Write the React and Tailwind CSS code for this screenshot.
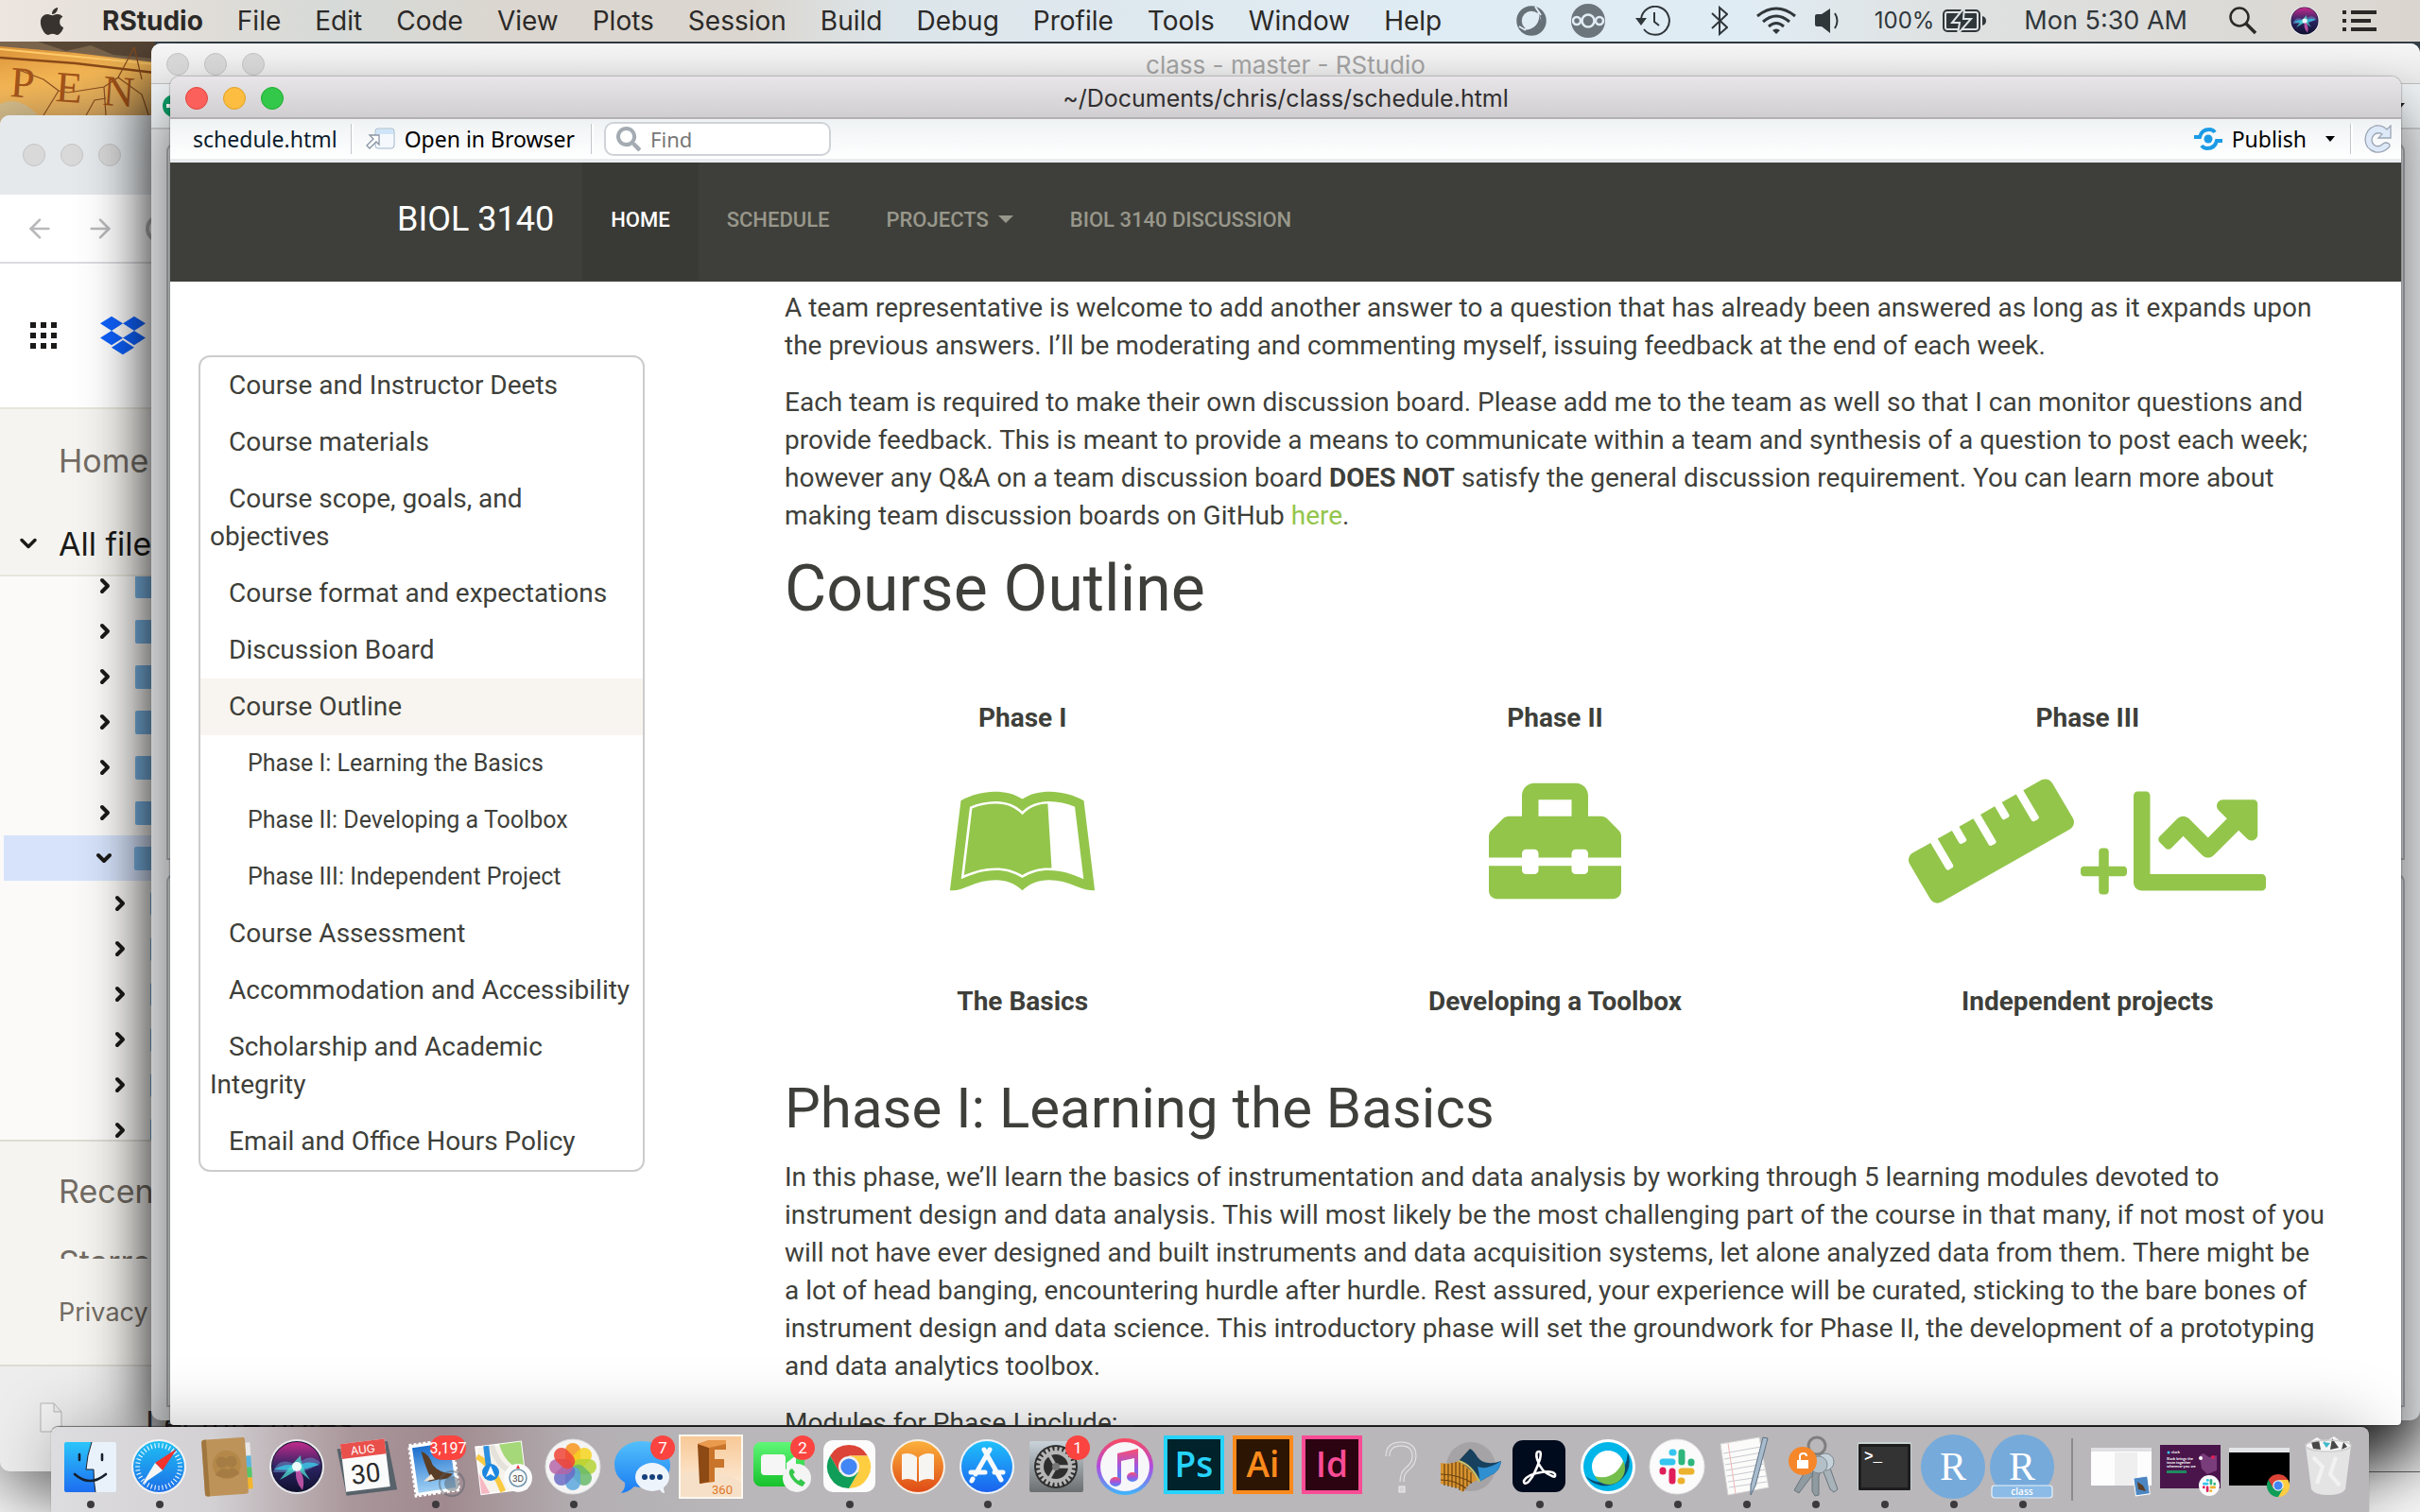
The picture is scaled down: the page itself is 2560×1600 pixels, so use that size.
import React from "react";
import {
  FaLeanpub,
  FaToolbox,
  FaRuler,
  FaPlus,
  FaChartLine,
  FaDropbox,
  FaApple,
  FaSearch,
} from "react-icons/fa";
import { ArrowLeft, ArrowRight, ChevronDown, ChevronRight } from "lucide-react";

const MENUS = ["File", "Edit", "Code", "View", "Plots", "Session", "Build", "Debug", "Profile", "Tools", "Window", "Help"];

/* ---------- menu bar ---------- */

function MenuBar() {
  return (
    <header
      className="relative z-40 flex h-[44px] items-center pl-[42px] pr-[46px] font-[Inter,sans-serif] text-[28px] text-[#2b2927] bg-[linear-gradient(90deg,#ede5df_0%,#dfdcd7_9%,#d6dad8_14%,#dbd6cf_21%,#dbd6cf_31%,#dce5ea_37%,#e0ecf4_60%,#e0ecf4_72%,#dfe2e2_80%,#dad5cf_100%)]"
    >
      <button aria-label="Apple menu" className="mr-[40px]">
        <FaApple className="h-[33px] w-[26px] text-[#38332e]" />
      </button>
      <nav className="flex items-center gap-[36px]">
        <button className="font-bold">RStudio</button>
        {MENUS.map((m) => (
          <button key={m}>{m}</button>
        ))}
      </nav>
      <div className="ml-auto flex items-center text-[#30373b]">
        <svg width="32" height="32" viewBox="0 0 32 32" aria-label="Sync">
          <circle cx="16" cy="16" r="13" fill="none" stroke="#667077" strokeWidth="5.5" />
          <path d="M23 7 C25 17 20 25 9 26 Q22 30 27 18 Z" fill="#667077" />
          <path d="M20 1 L26 10 M3 22 L10 26" stroke="#e0ecf4" strokeWidth="2" />
          <path d="M23 7 C25 17 20 24 9 25" fill="none" stroke="#e0ecf4" strokeWidth="1.5" />
        </svg>
        <svg className="ml-[26px]" width="36" height="36" viewBox="0 0 36 36" aria-label="Cloud client">
          <circle cx="18" cy="18" r="18" fill="#6b757b" />
          <g fill="#6b757b" stroke="#e0ecf4" strokeWidth="2.6">
            <circle cx="6" cy="18" r="4" />
            <circle cx="30" cy="18" r="4" />
            <circle cx="18" cy="18" r="6.5" />
          </g>
        </svg>
        <svg className="ml-[32px]" width="37" height="32" viewBox="0 0 37 32" fill="none" stroke="#30373b" strokeWidth="2" aria-label="Time Machine">
          <path d="M6 14 A15 15 0 1 1 9 25" />
          <path d="M20 7 V17 L25 21" />
          <path d="M0 13 H12 L6 21 Z" fill="#30373b" stroke="none" />
        </svg>
        <svg className="ml-[43px]" width="18" height="32" viewBox="0 0 18 32" fill="none" stroke="#30373b" strokeWidth="2" aria-label="Bluetooth">
          <path d="M1 8 L17 23 L9 30 V2 L17 9 L1 24" />
        </svg>
        <svg className="ml-[30px]" width="42" height="30" viewBox="0 0 42 30" fill="none" stroke="#30373b" strokeWidth="3" aria-label="Wi-Fi">
          <path d="M1 10 Q21 -6 41 10" />
          <path d="M7 16 Q21 4 35 16" />
          <path d="M13 21 Q21 14 29 21" />
          <path d="M17 25 Q21 22 25 25 L21 29 Z" fill="#30373b" stroke="none" />
        </svg>
        <svg className="ml-[20px]" width="26" height="26" viewBox="0 0 26 26" aria-label="Volume">
          <path d="M0 8 Q0 6 2 6 H7 L16 0 V26 L7 19 H2 Q0 19 0 17 Z" fill="#30373b" />
          <path d="M21 5 Q26 13 21 21" fill="none" stroke="#30373b" strokeWidth="2" />
        </svg>
        <span className="ml-[37px] text-[24px]">100%</span>
        <svg className="ml-[9px]" width="46" height="24" viewBox="0 0 46 24" aria-label="Battery charging">
          <rect x="1" y="1" width="38" height="22" rx="4" fill="none" stroke="#30373b" strokeWidth="2" />
          <rect x="4" y="4" width="32" height="16" rx="1" fill="#30373b" />
          <path d="M42 7 Q46 8 46 12 Q46 16 42 17 Z" fill="#30373b" />
          <path d="M23 -2 L10 14 H18 L16 26 L30 10 H22 Z" fill="#30373b" stroke="#dfe4e5" strokeWidth="2" />
        </svg>
        <span className="ml-[40px] text-[27px]">Mon 5:30 AM</span>
        <svg className="ml-[44px]" width="30" height="30" viewBox="0 0 30 30" fill="none" stroke="#2b2927" strokeWidth="2.5" aria-label="Search">
          <circle cx="11" cy="11" r="9.5" />
          <path d="M18 18 L28 28" strokeWidth="3.5" />
        </svg>
        <svg className="ml-[34px]" width="32" height="32" viewBox="0 0 64 64" aria-label="Siri">
          <SiriOrb r={31} cx={32} cy={32} />
        </svg>
        <svg className="ml-[24px]" width="36" height="22" viewBox="0 0 36 22" fill="#2b2927" aria-label="Notification Center">
          <path d="M0 0h4v4h-4zM0 9h4v4h-4zM0 18h4v4h-4zM9 0h27v4h-27zM9 9h21v4h-21zM9 18h27v4h-27z" />
        </svg>
      </div>
    </header>
  );
}

function SiriOrb({ cx, cy, r }) {
  return (
    <g>
      <circle cx={cx} cy={cy} r={r} fill="#e9e9ee" />
      <circle cx={cx} cy={cy} r={r - 2} fill="#12122c" />
      <circle cx={cx} cy={cy} r={r - 3} fill="url(#siriTop)" />
      <g transform={`translate(${cx} ${cy})`}>
        <path d="M-25 6 Q-20 -12 0 -2 Q14 -16 25 -4 Q14 4 1 6 Q-10 6 -25 6Z" fill="#6fa6dc" opacity=".45" />
        <path d="M-24 3 Q-8 -6 0 1 Q10 -8 24 -2 Q12 2 1 4 Q-10 4 -24 3Z" fill="#39c7e6" opacity=".8" />
        <path d="M-18 14 Q-6 -2 4 -12 Q4 0 14 14 Q4 6 0 3 Q-6 8 -18 14Z" fill="#4de0d0" opacity=".75" />
        <path d="M0 0 Q10 10 6 25 Q-4 14 0 0Z" fill="#e964c0" opacity=".75" />
        <circle r="5" fill="#fff" opacity=".9" />
      </g>
    </g>
  );
}

/* ---------- background windows ---------- */

function Wallpaper() {
  return (
    <svg className="absolute left-0 top-[44px] z-0" width="164" height="90" viewBox="0 0 164 90" aria-hidden="true">
      <defs>
        <linearGradient id="stone" x1="0" y1="0" x2="0.3" y2="1">
          <stop offset="0" stopColor="#d98f35" />
          <stop offset=".5" stopColor="#f3b655" />
          <stop offset="1" stopColor="#d8a862" />
        </linearGradient>
      </defs>
      <rect width="164" height="90" fill="url(#stone)" />
      <path d="M0 0 H164 V22 L80 12 L0 5 Z" fill="#7a644c" />
      <path d="M40 0 L70 10 L96 4 L120 14 L164 18 V0 Z" fill="#4b3a2e" opacity=".7" />
      <path d="M0 17 L80 23 L164 33" stroke="#8a4a18" strokeWidth="2.5" fill="none" />
      <path d="M0 8 L164 24" stroke="#ffcb6a" strokeWidth="2" fill="none" />
      <path d="M62 52 L72 54 L110 48 L125 38 L142 6 M110 48 L112 78 M125 38 L150 56 L158 80 M142 6 L150 40 M62 52 L46 78 M20 30 L46 40 L62 52 M90 80 L100 62 L112 60" stroke="#8a4e20" strokeWidth="1.2" fill="none" />
      <path d="M0 66 Q20 56 40 78 L40 90 H0Z" fill="#c7bd9d" opacity=".7" />
      <g fill="#a4541a" fontFamily="Liberation Serif, serif" fontSize="46">
        <text x="10" y="58" transform="rotate(4 10 58)">P</text>
        <text x="58" y="63" transform="rotate(4 58 63)">E</text>
        <text x="108" y="67" transform="rotate(4 108 67)">N</text>
      </g>
    </svg>
  );
}

function GrayDots() {
  return (
    <div className="flex gap-[16px]">
      {[0, 1, 2].map((i) => (
        <span key={i} className="size-[24px] rounded-full border border-[#c4c4c4] bg-[#d9d9d9]" />
      ))}
    </div>
  );
}

function BrowserWindow() {
  return (
    <section
      aria-label="Dropbox"
      className="absolute bottom-[43px] left-0 top-[122px] z-10 flex w-[1200px] flex-col overflow-hidden rounded-[10px] bg-[#ededed] font-[Inter,sans-serif] shadow-[0_20px_60px_rgba(0,0,0,0.45)]"
    >
      <div className="flex h-[84px] shrink-0 items-center bg-[#e5e9ec] pl-[24px]">
        <GrayDots />
      </div>
      <div className="flex h-[73px] shrink-0 items-center gap-[32px] border-b-2 border-[#dcdce0] bg-white pl-[26px] text-[#b9b9bb]">
        <ArrowLeft size={32} />
        <ArrowRight size={32} />
        <span className="size-[30px] rounded-full border-4" />
      </div>
      <div className="flex h-[154px] shrink-0 items-center gap-[46px] border-b-2 border-[#e8e5dc] bg-white pl-[32px]">
        <div className="grid grid-cols-3 gap-[5px]">
          {Array.from({ length: 9 }, (_, i) => (
            <span key={i} className="size-[6px] bg-[#1b1a19]" />
          ))}
        </div>
        <FaDropbox className="size-[48px] text-[#0f62fe]" />
      </div>
      <div className="h-[177px] shrink-0 border-b-2 border-[#e8e5dc] bg-[#f5f4f0] text-[34px]">
        <div className="flex h-[108px] items-center pl-[62px] text-[#736c64]">Home</div>
        <div className="flex h-[68px] items-center gap-[18px] pl-[16px] text-[#1b1a19]">
          <ChevronDown size={28} strokeWidth={3} />
          All files
        </div>
      </div>
      <div className="h-[596px] shrink-0 overflow-hidden bg-[#fbfaf8]">
        <div className="-mt-[14px]">
          {Array.from({ length: 13 }, (_, i) => (
            <div
              key={i}
              className={
                i === 6
                  ? "ml-[4px] flex h-[48px] items-center bg-[#d6e3fb] pl-[94px]"
                  : i > 6
                    ? "flex h-[48px] items-center pl-[115px]"
                    : "flex h-[48px] items-center pl-[99px]"
              }
            >
              {i === 6 ? (
                <ChevronDown size={24} strokeWidth={4} className="text-[#1b1a19]" />
              ) : (
                <ChevronRight size={24} strokeWidth={4} className="text-[#1b1a19]" />
              )}
              <span className="ml-[20px] h-[25px] w-[40px] rounded-[2px] bg-[#7bb5e6]" />
            </div>
          ))}
        </div>
      </div>
      <div className="h-[240px] shrink-0 border-b-2 border-t-2 border-[#dedbd3] bg-[#f5f4f0] text-[#736c64]">
        <div className="flex h-[104px] items-center pl-[62px] text-[34px]">Recents</div>
        <div className="h-[20px] overflow-hidden pl-[62px] text-[34px] leading-[48px]">Starred</div>
        <div className="flex h-[114px] items-center pl-[62px] text-[27px]">Privacy</div>
      </div>
      <div className="flex flex-1 items-start pl-[42px] pt-[38px]">
        <svg width="24" height="32" viewBox="0 0 24 32" fill="#f4f4f4" stroke="#b5b5b5" aria-hidden="true">
          <path d="M1 1 H15 L23 10 V31 H1 Z M15 1 V10 H23" />
        </svg>
        <span className="ml-[88px] text-[34px] leading-[44px] text-[#3a3a3a]">Lecture notes</span>
      </div>
    </section>
  );
}

function StudioWindow() {
  return (
    <section
      aria-label="class - master - RStudio"
      className="absolute bottom-[97px] left-[160px] right-0 top-[46px] z-20 rounded-[10px] bg-[#e6e8ea] shadow-[0_24px_70px_rgba(0,0,0,0.8)]"
    >
      <div className="relative flex h-[43px] items-start justify-center rounded-t-[10px] border-b border-[#bfbfbf] bg-gradient-to-b from-[#f6f6f6] to-[#eaeaea] pt-[6px] font-[Inter,sans-serif] text-[26px] leading-[34px] text-[#a3a3a3]">
        <div className="absolute left-[16px] top-[10px]">
          <GrayDots />
        </div>
        class - master - RStudio
      </div>
      <div className="flex h-[48px] items-center justify-between border-b-2 border-[#c9cccf] bg-[#eff3f5] pl-[12px]">
        <span className="flex size-[24px] items-center justify-center rounded-full bg-[#0a9c66] text-white">
          <span className="h-[4px] w-[16px] bg-white" />
        </span>
        <span className="mr-[16px] size-0 border-x-[5px] border-t-[6px] border-x-transparent border-t-[#222]" />
      </div>
      <div className="mx-[16px] mt-[15px] h-[758px] rounded-t-[8px] border-2 border-[#aeb2b5]" />
      <div className="mx-[16px] mt-[15px] h-[564px] rounded-t-[8px] border-2 border-[#aeb2b5]" />
    </section>
  );
}

/* ---------- viewer window ---------- */

const TOC = [
  { t: "Course and Instructor Deets" },
  { t: "Course materials" },
  { t: "Course scope, goals, and objectives" },
  { t: "Course format and expectations" },
  { t: "Discussion Board" },
  { t: "Course Outline", active: true },
  { t: "Phase I: Learning the Basics", sub: true },
  { t: "Phase II: Developing a Toolbox", sub: true },
  { t: "Phase III: Independent Project", sub: true },
  { t: "Course Assessment" },
  { t: "Accommodation and Accessibility" },
  { t: "Scholarship and Academic Integrity" },
  { t: "Email and Office Hours Policy" },
];

function Divider() {
  return <span className="h-[32px] w-[3px] border-l border-[#c3c7ca] bg-white" />;
}

function Toolbar() {
  return (
    <div className="flex h-[46px] shrink-0 items-center border-b-4 border-[#e9ecee] bg-gradient-to-b from-[#eff2f4] to-white pl-[24px] pr-[9px] font-['Noto_Sans',sans-serif] text-[23px] text-black">
      <span className="text-[#0b1c2c]">schedule.html</span>
      <span className="ml-[14px] flex">
        <Divider />
      </span>
      <button className="ml-[13px] flex items-center gap-[10px]">
        <svg width="31" height="24" viewBox="0 0 31 24" aria-hidden="true">
          <rect x="10" y="1" width="20" height="21" rx="3" fill="#f5f9fd" stroke="#9fb6cc" />
          <path d="M11 7 V4 Q11 2 13 2 H27 Q29 2 29 4 V7 Z" fill="#cfe4f8" />
          <path d="M4 8 H14 V18 L11 15 L4 22 L1 19 L8 12 Z" fill="#fff" stroke="#8894a4" strokeWidth="1.3" />
        </svg>
        Open in Browser
      </button>
      <span className="ml-[17px] flex">
        <Divider />
      </span>
      <label className="ml-[11px] flex h-[36px] w-[240px] items-center gap-[10px] rounded-[10px] border-2 border-[#cfd3d8] bg-white px-[11px]">
        <FaSearch className="size-[26px] shrink-0 text-[#a4abb2]" />
        <input type="text" aria-label="Find" placeholder="Find" className="w-full bg-transparent text-[22px] outline-none placeholder:text-[#777]" />
      </label>
      <button className="ml-auto flex items-center gap-[10px]">
        <svg width="30" height="26" viewBox="0 0 30 26" fill="none" stroke="#1b9be6" strokeWidth="4" aria-hidden="true">
          <path d="M0 11 H6 Q8 3 16 3 Q20 3 22 6" />
          <path d="M30 15 H24 Q22 23 14 23 Q10 23 8 20" />
          <circle cx="15" cy="13" r="4.5" fill="#1b9be6" stroke="none" />
        </svg>
        Publish
      </button>
      <button aria-label="Publish options" className="ml-[20px]">
        <span className="block size-0 border-x-[5px] border-t-[6px] border-x-transparent border-t-black" />
      </button>
      <span className="ml-[16px] flex">
        <Divider />
      </span>
      <button aria-label="Refresh" className="ml-[12px]">
        <svg width="30" height="30" viewBox="0 0 30 30" aria-hidden="true">
          <path
            d="M28 1 V14 H15 L19 10 Q14 7 10 11 Q6 16 10 21 Q15 25 20 20 Q23 18 26 20 Q28 22 26 24 Q20 30 12 29 Q1 26 1 15 Q2 4 12 1 Q19 0 24 5 Z"
            fill="#dde9f8"
            stroke="#9ca6b4"
            strokeWidth="1.3"
          />
        </svg>
      </button>
    </div>
  );
}

function NavItem({ children, active }) {
  return (
    <a
      href="#"
      className={
        active
          ? "flex h-full items-center bg-[#393a35] px-[30px] pb-[4px] text-white"
          : "flex h-full items-center px-[30px] pb-[4px] text-[#98978b]"
      }
    >
      {children}
    </a>
  );
}

function PhaseColumn({ top, bottom, children }) {
  return (
    <div className="flex flex-1 flex-col items-center font-bold">
      <div>{top}</div>
      <div className="mb-20 mt-10 flex h-[140px] items-end gap-[7px] text-[#93c54b]">{children}</div>
      <div>{bottom}</div>
    </div>
  );
}

function ViewerWindow() {
  return (
    <section
      aria-label="~/Documents/chris/class/schedule.html"
      className="absolute bottom-[92px] left-[180px] right-[20px] top-[81px] z-30 flex flex-col overflow-hidden rounded-t-[10px] rounded-b-[4px] bg-white shadow-[0_34px_60px_rgba(0,0,0,0.55),0_0_2px_rgba(0,0,0,0.6)]"
    >
      <div className="relative flex h-[45px] shrink-0 items-center justify-center border-b-2 border-[#b2b0b2] bg-gradient-to-b from-[#e8e6e8] to-[#d0ced0] pt-[4px] font-[Inter,sans-serif] text-[25px] text-[#302e30]">
        <div className="absolute left-[16px] top-[11px] flex gap-[16px]">
          <button aria-label="Close" className="size-[24px] rounded-full border border-[#e2463f] bg-[#fc605b]" />
          <button aria-label="Minimize" className="size-[24px] rounded-full border border-[#dfa023] bg-[#fdbd40]" />
          <button aria-label="Zoom" className="size-[24px] rounded-full border border-[#1dac2f] bg-[#34c84a]" />
        </div>
        ~/Documents/chris/class/schedule.html
      </div>
      <Toolbar />
      <nav className="flex h-[126px] shrink-0 items-center bg-[#3e3f3a] pb-[2px] pl-[210px] font-[Roboto,sans-serif] text-[22px] font-medium">
        <a href="#" className="px-[30px] pb-[4px] text-[36px] font-normal text-white">
          BIOL 3140
        </a>
        <NavItem active>HOME</NavItem>
        <NavItem>SCHEDULE</NavItem>
        <NavItem>
          PROJECTS
          <span className="ml-[10px] size-0 border-x-[8px] border-t-[8px] border-x-transparent border-t-[#98978b]" />
        </NavItem>
        <NavItem>BIOL 3140 DISCUSSION</NavItem>
      </nav>
      <div className="flex min-h-0 flex-1 overflow-hidden pl-[30px] pr-[80px] font-[Roboto,sans-serif] text-[28px] leading-[40px] text-[#3e3f3a]">
        <aside className="w-[472px] shrink-0 pt-[78px]">
          <ul className="overflow-hidden rounded-[12px] border-2 border-[#cccccc]">
            {TOC.map((e) => (
              <li key={e.t}>
                <a
                  href="#"
                  className={
                    e.sub
                      ? "block py-[10px] pl-[50px] pr-[8px] text-[25px]"
                      : e.active
                        ? "block bg-[#f8f5f0] py-[10px] pl-[10px] pr-[8px] indent-[20px]"
                        : "block py-[10px] pl-[10px] pr-[8px] indent-[20px]"
                  }
                >
                  {e.t}
                </a>
              </li>
            ))}
          </ul>
        </aside>
        <main className="ml-[148px] min-w-0 flex-1 pt-2">
          <p>
            A team representative is welcome to add another answer to a question that has already been answered as long as it expands upon the previous answers. I’ll be moderating and commenting myself, issuing feedback at the end of each week.
          </p>
          <p className="mt-5">
            Each team is required to make their own discussion board. Please add me to the team as well so that I can monitor questions and provide feedback. This is meant to provide a means to communicate within a team and synthesis of a question to post each week; however any Q&amp;A on a team discussion board <strong>DOES NOT</strong> satisfy the general discussion requirement. You can learn more about making team discussion boards on GitHub{" "}
            <a href="#" className="text-[#93c54b]">
              here
            </a>
            .
          </p>
          <h1 className="mt-5 text-[68px] leading-[74px]">Course Outline</h1>
          <div className="-mx-[30px] mt-20 flex">
            <PhaseColumn top="Phase I" bottom="The Basics">
              <FaLeanpub className="h-[140px] w-[157px]" />
            </PhaseColumn>
            <PhaseColumn top="Phase II" bottom="Developing a Toolbox">
              <FaToolbox className="size-[140px]" />
            </PhaseColumn>
            <PhaseColumn top="Phase III" bottom="Independent projects">
              <FaRuler className="h-[140px] w-[175px]" />
              <FaPlus className="mb-[10px] h-[56px] w-[49px]" />
              <FaChartLine className="size-[140px]" />
            </PhaseColumn>
          </div>
          <h2 className="mt-15 text-[60px] leading-[66px]">Phase I: Learning the Basics</h2>
          <p className="mt-5">
            In this phase, we’ll learn the basics of instrumentation and data analysis by working through 5 learning modules devoted to instrument design and data analysis. This will most likely be the most challenging part of the course in that many, if not most of you will not have ever designed and built instruments and data acquisition systems, let alone analyzed data from them. There might be a lot of head banging, encountering hurdle after hurdle. Rest assured, your experience will be curated, sticking to the bare bones of instrument design and data science. This introductory phase will set the groundwork for Phase II, the development of a prototyping and data analytics toolbox.
          </p>
          <p className="mt-5">Modules for Phase I include:</p>
        </main>
      </div>
    </section>
  );
}

/* ---------- dock ---------- */

function Badge({ x, y, w = 26, size = 17, children }) {
  return (
    <g>
      <rect x={x - w / 2} y={y - 13} width={w} height="26" rx="13" fill="#fb4440" />
      <text x={x} y={y + 6} textAnchor="middle" fontSize={size} fill="#fff" fontFamily="Roboto, sans-serif">
        {children}
      </text>
    </g>
  );
}

function ChromeMark({ cx, cy, r }) {
  return (
    <g transform={`translate(${cx} ${cy}) scale(${r / 24})`}>
      <path d="M-20.8 -12 A24 24 0 0 1 20.8 -12 H0 L-10.4 6 Z" fill="#db4437" />
      <path d="M20.8 -12 A24 24 0 0 1 0 24 L10.4 6 L0 -12 Z" fill="#ffcd40" />
      <path d="M0 24 A24 24 0 0 1 -20.8 -12 L-10.4 6 L10.4 6 Z" fill="#0f9d58" />
      <circle r="11.5" fill="#f1f1f1" />
      <circle r="9" fill="#4285f4" />
    </g>
  );
}

function SlackMark({ cx, cy, s }) {
  return (
    <g transform={`translate(${cx} ${cy}) scale(${s})`} strokeWidth="7" strokeLinecap="round">
      <path d="M-4 -15 H-5" stroke="#36c5f0" />
      <path d="M-15 -5 H-5" stroke="#36c5f0" />
      <path d="M5 -15 V-5" stroke="#2eb67d" />
      <path d="M15 -5 V-4" stroke="#2eb67d" />
      <path d="M5 5 H15" stroke="#ecb22e" />
      <path d="M5 15 H4" stroke="#ecb22e" />
      <path d="M-5 5 V15" stroke="#e01e5a" />
      <path d="M-15 5 V4" stroke="#e01e5a" />
    </g>
  );
}

function AdobeTile({ bg, fg, children }) {
  return (
    <g>
      <rect x="6" y="9" width="60" height="58" fill={bg} stroke={fg} strokeWidth="4" />
      <text x="36" y="51" textAnchor="middle" fontSize="37" fill={fg} fontFamily="Open Sans, sans-serif" fontWeight="600">
        {children}
      </text>
    </g>
  );
}

function RTile() {
  return (
    <g>
      <circle cx="36" cy="40" r="34" fill="#75aadb" />
      <text x="36" y="54" textAnchor="middle" fontSize="42" fill="#fff" fontFamily="Liberation Serif, serif">
        R
      </text>
    </g>
  );
}

const GEAR = Array.from({ length: 24 }, (_, i) => i * 15);
const TICKS = Array.from({ length: 36 }, (_, i) => i * 10);
const PETALS = ["#f7941d", "#f6d21e", "#b4d334", "#67b86a", "#5ba7dd", "#6a6cc4", "#b565a7", "#ee4436"];

const APPS = [
  {
    name: "Finder",
    dot: true,
    art: (
      <g>
        <rect x="9" y="14" width="55" height="53" rx="2" fill="#e9f1fa" />
        <path d="M9 16 Q9 14 11 14 H38 Q33 28 32 43 H40 Q40 56 42 67 H11 Q9 67 9 65 Z" fill="url(#finder)" />
        <path d="M25 27 V33 M49 27 V33 M20 48 Q36 62 53 48" fill="none" stroke="#15202e" strokeWidth="2.6" strokeLinecap="round" />
        <path d="M38 14 Q33 28 32 43 H40 Q40 56 42 67" fill="none" stroke="#15202e" strokeWidth="1" />
      </g>
    ),
  },
  {
    name: "Safari",
    dot: true,
    art: (
      <g>
        <circle cx="36" cy="40" r="29" fill="#f3f3f4" />
        <circle cx="36" cy="40" r="27" fill="url(#safari)" />
        {TICKS.map((a) => (
          <path key={a} d="M36 15 V20" stroke="#fff" strokeWidth="1" transform={`rotate(${a} 36 40)`} />
        ))}
        <path d="M55 21 L40 44 L32 36 Z" fill="#f3322d" />
        <path d="M18 59 L32 36 L40 44 Z" fill="#f6f6f6" />
      </g>
    ),
  },
  {
    name: "Contacts",
    art: (
      <g transform="rotate(-4 36 40)">
        <rect x="52" y="16" width="9" height="14" fill="#e8e8e8" />
        <rect x="52" y="30" width="9" height="12" fill="#5ab6e0" />
        <rect x="52" y="42" width="9" height="11" fill="#55c66a" />
        <rect x="52" y="53" width="9" height="12" fill="#f3b52b" />
        <rect x="10" y="10" width="46" height="60" rx="3" fill="#bd935a" />
        <path d="M10 13 Q10 10 13 10 H15 V70 H13 Q10 70 10 67Z" fill="#a0763f" />
        <circle cx="35" cy="38" r="15" fill="#b38849" />
        <circle cx="30" cy="35" r="6" fill="#a57c44" />
        <circle cx="40" cy="35" r="6" fill="#a57c44" />
        <path d="M22 48 Q30 38 36 44 Q42 38 48 48 Q36 56 22 48Z" fill="#a57c44" />
      </g>
    ),
  },
  { name: "Siri", art: <SiriOrb cx={36} cy={40} r={29} /> },
  {
    name: "Calendar",
    art: (
      <g transform="rotate(-7 36 40)">
        <path d="M8 18 L62 16 L66 68 L12 68 Z" fill="#57626a" />
        <rect x="12" y="13" width="47" height="51" fill="#fbfbfb" />
        <rect x="12" y="13" width="47" height="16" fill="#e9504c" />
        <text x="35" y="26" textAnchor="middle" fontSize="12" fill="#fff" fontFamily="Inter, sans-serif">AUG</text>
        <text x="35" y="57" textAnchor="middle" fontSize="28" fill="#2b2b2b" fontFamily="Roboto, sans-serif">30</text>
      </g>
    ),
  },
  {
    name: "Mail",
    dot: true,
    art: (
      <g>
        <g transform="rotate(-8 36 40)">
          <rect x="12" y="14" width="46" height="54" fill="#fff" stroke="#fff" strokeWidth="3" strokeDasharray="3 2" />
          <rect x="15" y="17" width="40" height="48" fill="url(#mailsky)" />
          <path d="M24 22 Q32 26 34 38 Q40 48 54 50 Q48 56 38 54 L27 55 L29 48 Q25 34 24 22Z" fill="#5a3d25" />
          <path d="M22 54 L31 47 L34 53 Z" fill="#f0e6d6" />
        </g>
        <circle cx="54" cy="58" r="13" fill="none" stroke="#566069" strokeWidth="2" opacity=".5" />
        <circle cx="54" cy="58" r="8" fill="#566069" opacity=".5" />
        <Badge x={50} y={20} w={38} size={16}>3,197</Badge>
      </g>
    ),
  },
  {
    name: "Maps",
    art: (
      <g>
        <g transform="rotate(-7 36 40)">
          <rect x="9" y="16" width="48" height="50" fill="#f6f3ec" stroke="#fff" strokeWidth="2" />
          <path d="M34 16 H57 V46 Q38 40 34 16Z" fill="#a5d878" />
          <path d="M26 16 Q30 46 57 52" fill="none" stroke="#e4e2da" strokeWidth="6" />
          <path d="M9 26 Q24 36 32 66" fill="none" stroke="#f9c940" strokeWidth="6" />
          <path d="M9 44 L18 66 H9Z" fill="#f6b8c3" />
          <path d="M20 16 V52" stroke="#2d8fe0" strokeWidth="6" />
        </g>
        <circle cx="22" cy="46" r="9" fill="#1d87e0" />
        <path d="M22 39 L27 51 L22 48 L17 51Z" fill="#fff" />
        <circle cx="51" cy="52" r="15" fill="#fafafa" />
        <circle cx="51" cy="52" r="9" fill="none" stroke="#6d93ac" strokeWidth="1.5" />
        <path d="M51 38 L53 42 H49Z" fill="#e33" />
        <text x="51" y="56" textAnchor="middle" fontSize="9" fill="#444" fontFamily="Inter, sans-serif">3D</text>
      </g>
    ),
  },
  {
    name: "Photos",
    dot: true,
    art: (
      <g>
        <circle cx="36" cy="40" r="29" fill="#f4f4f4" stroke="#dcdcdc" />
        {PETALS.map((c, i) => (
          <rect key={c} x="28" y="15" width="16" height="25" rx="8" fill={c} opacity=".85" transform={`rotate(${i * 45} 36 40)`} />
        ))}
      </g>
    ),
  },
  {
    name: "Messages",
    art: (
      <g>
        <path d="M36 13 C54 13 66 24 66 38 C66 52 54 62 38 62 Q32 62 28 61 Q22 67 14 68 Q19 63 18 57 Q7 50 7 38 C7 24 19 13 36 13Z" fill="url(#msg)" />
        <ellipse cx="47" cy="51" rx="18" ry="15" fill="#eef4fb" />
        <path d="M54 62 Q56 68 60 68 L58 58Z" fill="#eef4fb" />
        <g fill="#14407c">
          <circle cx="39" cy="51" r="3" />
          <circle cx="47" cy="51" r="3" />
          <circle cx="55" cy="51" r="3" />
        </g>
        <Badge x={58} y={20}>7</Badge>
      </g>
    ),
  },
  {
    name: "Fusion 360",
    art: (
      <g>
        <rect x="3" y="7" width="66" height="66" fill="url(#fusion)" stroke="#fdf8f0" strokeWidth="2" />
        <path d="M4 48 Q36 38 68 56 V72 H4Z" fill="#f6e0c8" />
        <path d="M22 16 L34 12 H52 V22 H40 V32 H50 V41 H40 V56 L24 58 Q26 40 22 16Z" fill="#c8742a" />
        <path d="M22 16 L34 20 V56 L24 58Z" fill="#8d4a14" />
        <path d="M34 12 H52 V16 L34 20 L22 16Z" fill="#e99a4d" />
        <text x="48" y="69" textAnchor="middle" fontSize="13" fill="#e2771f" fontFamily="Roboto, sans-serif">360</text>
      </g>
    ),
  },
  {
    name: "FaceTime",
    art: (
      <g>
        <rect x="8" y="14" width="54" height="47" rx="8" fill="url(#ftime)" />
        <rect x="16" y="27" width="26" height="22" rx="4" fill="#f6f6f6" />
        <path d="M43 36 L53 28 V48 L43 42Z" fill="#f6f6f6" />
        <circle cx="54" cy="52" r="15" fill="#f4f4f4" />
        <path d="M47 43 Q44 46 48 52 Q54 60 60 61 L63 57 L58 53 L56 55 Q52 53 50 48 L52 46 L49 42Z" fill="#35c84c" />
        <Badge x={60} y={20}>2</Badge>
      </g>
    ),
  },
  {
    name: "Chrome",
    dot: true,
    art: (
      <g>
        <rect x="9" y="12" width="55" height="55" rx="10" fill="#fcfcfc" />
        <ChromeMark cx={36} cy={40} r={23} />
      </g>
    ),
  },
  {
    name: "Books",
    art: (
      <g>
        <circle cx="36" cy="40" r="29" fill="#f6efe6" />
        <circle cx="36" cy="40" r="27" fill="url(#books)" />
        <path d="M35 30 Q28 24 19 27 V54 Q28 51 35 56Z M37 30 Q44 24 53 27 V54 Q44 51 37 56Z" fill="#f7f5f2" />
      </g>
    ),
  },
  {
    name: "App Store",
    dot: true,
    art: (
      <g>
        <circle cx="36" cy="40" r="29" fill="#eef3f8" />
        <circle cx="36" cy="40" r="27" fill="url(#store)" />
        <g stroke="#f7f9fc" strokeWidth="5" strokeLinecap="round" fill="none">
          <path d="M33 22 L51 54 M39 22 L24 48 M19 46 H34 M44 46 H53 M21 53 L20 55" />
        </g>
      </g>
    ),
  },
  {
    name: "System Preferences",
    art: (
      <g>
        <rect x="8" y="13" width="57" height="54" rx="2" fill="url(#prefs)" />
        <circle cx="36" cy="40" r="23" fill="#2e2e2e" />
        {GEAR.map((a) => (
          <path key={a} d="M36 19 V24" stroke="#b9b9b9" strokeWidth="3" transform={`rotate(${a} 36 40)`} />
        ))}
        <circle cx="36" cy="40" r="15" fill="none" stroke="#b5b5b5" strokeWidth="4" />
        <path d="M36 40 L52 40 M36 40 L28 26 M36 40 L28 54" stroke="#b5b5b5" strokeWidth="3.5" />
        <circle cx="36" cy="40" r="4" fill="#777" />
        <Badge x={59} y={20}>1</Badge>
      </g>
    ),
  },
  {
    name: "iTunes",
    art: (
      <g>
        <circle cx="36" cy="40" r="30" fill="url(#tunesRing)" />
        <circle cx="36" cy="40" r="26" fill="#f7f6f9" />
        <g fill="url(#tunes)">
          <path d="M28 26 L50 21 V50 H46 V31 L32 34 V56 H28Z" />
          <ellipse cx="26" cy="56" rx="6" ry="5" />
          <ellipse cx="44" cy="51" rx="6" ry="5" />
        </g>
      </g>
    ),
  },
  { name: "Photoshop", art: <AdobeTile bg="#00222b" fg="#26d3fb">Ps</AdobeTile> },
  { name: "Illustrator", art: <AdobeTile bg="#2d1503" fg="#fb8a1c">Ai</AdobeTile> },
  { name: "InDesign", art: <AdobeTile bg="#2b0311" fg="#f94c95">Id</AdobeTile> },
  {
    name: "Missing application",
    art: (
      <g>
        <path d="M22 29 Q22 16 36 16 Q50 16 50 29 Q50 37 42 43 Q37 47 37 56" fill="none" stroke="#e6e6e8" strokeWidth="5" />
        <path d="M22 29 Q22 16 36 16 Q50 16 50 29 Q50 37 42 43 Q37 47 37 56" fill="none" stroke="#bdbbbe" strokeWidth="3" />
        <rect x="34" y="61" width="6" height="6" fill="#d4d3d6" stroke="#ececec" />
      </g>
    ),
  },
  {
    name: "MATLAB",
    art: (
      <g>
        <circle cx="37" cy="40" r="26" fill="#a5a3a6" />
        <path d="M5 36 Q16 38 24 34 L36 21 L50 44 L44 54 L36 58 L28 67 L24 63 L5 58Z" fill="#d8942f" />
        <g stroke="#6d4210" strokeWidth="1.2" fill="none">
          <path d="M9 37 V60 M13 37 V61 M17 36 V62 M21 35 V63 M25 35 V65 M29 38 V66 M33 42 V61 M37 46 V58 M5 48 Q22 48 38 57 M5 54 Q20 54 32 63" />
        </g>
        <path d="M24 34 L36 21 Q40 23 44 30 Q52 40 69 34 Q68 45 58 49 L46 56 Q38 42 24 34Z" fill="#17415f" />
        <path d="M44 40 Q54 44 69 34 Q68 45 58 49 L46 56 Q46 46 44 40Z" fill="#2f8fd0" />
        <path d="M24 34 Q38 38 46 56" fill="none" stroke="#c9c06a" strokeWidth="2" />
      </g>
    ),
  },
  {
    name: "Acrobat",
    dot: true,
    art: (
      <g>
        <rect x="8" y="12" width="56" height="55" rx="11" fill="#000b1d" />
        <path d="M36 24 Q32 24 34 32 Q38 46 50 50 Q54 52 53 48 Q50 44 38 46 Q24 48 20 55 Q20 60 25 56 Q32 48 37 32 Q39 24 36 24Z" fill="none" stroke="#fff" strokeWidth="2.6" />
      </g>
    ),
  },
  {
    name: "Webex",
    dot: true,
    art: (
      <g>
        <circle cx="36" cy="40" r="29" fill="#fff" />
        <circle cx="36" cy="40" r="26" fill="#00b5e8" />
        <path d="M57 25 A26 26 0 0 1 12 50 Q28 62 44 52 Q56 42 57 25Z" fill="#0a4b70" />
        <circle cx="36" cy="40" r="17" fill="#fff" />
        <path d="M52 34 A17 17 0 0 1 22 50 Q34 54 44 46 Q50 40 52 34Z" fill="#74bf4b" />
      </g>
    ),
  },
  {
    name: "Slack",
    dot: true,
    art: (
      <g>
        <circle cx="36" cy="40" r="29" fill="#fbfbfb" stroke="#e2e2e2" />
        <SlackMark cx={36} cy={40} s={1} />
      </g>
    ),
  },
  {
    name: "TextEdit",
    dot: true,
    art: (
      <g>
        <path d="M9 16 L50 9 L60 62 L17 70Z" fill="#fbfbfa" stroke="#d5d5d5" />
        <path d="M12 26 L52 19 M13 32 L53 25 M14 38 L54 31 M15 44 L55 37 M16 50 L56 43 M17 56 L57 50 M18 62 L58 56" stroke="#c9cbd0" strokeWidth="1.2" />
        <path d="M17 15 L25 69" stroke="#f0b8b8" />
        <path d="M54 9 L59 10 L46 60 L41 70 L41 60Z" fill="#a9bccd" stroke="#5c7186" />
      </g>
    ),
  },
  {
    name: "Keychain Access",
    dot: true,
    art: (
      <g>
        <circle cx="38" cy="18" r="9" fill="none" stroke="#7f7f7f" strokeWidth="3" />
        <g fill="#8e9a a2" stroke="#6b757b" strokeWidth="1">
          <path d="M42 38 L50 36 L60 64 L56 67 L52 64Z" fill="#a7b2b9" />
          <path d="M34 42 H43 L40 50 V70 L36 71 L33 66 V50Z" fill="#8f9aa1" />
          <path d="M26 44 L34 48 L19 68 L14 65Z" fill="#8f9aa1" />
        </g>
        <circle cx="47" cy="35" r="9" fill="#c6d2da" stroke="#7e8990" />
        <circle cx="40" cy="38" r="9" fill="#b4c0c8" stroke="#7e8990" />
        <circle cx="23" cy="34" r="15" fill="#f5872a" />
        <rect x="17" y="33" width="12" height="9" fill="#fff" />
        <path d="M20 33 V29 Q20 26 24 26 Q27 26 27 29" fill="none" stroke="#fff" strokeWidth="2" />
      </g>
    ),
  },
  {
    name: "Terminal",
    dot: true,
    art: (
      <g>
        <rect x="8" y="14" width="57" height="51" rx="2" fill="#c9d2d2" />
        <rect x="9" y="16" width="55" height="49" rx="1" fill="#1d1d1d" />
        <rect x="12" y="19" width="49" height="43" fill="#333" />
        <text x="15" y="34" fontSize="16" fill="#fff" fontFamily="Liberation Mono, monospace" fontWeight="700">&gt;_</text>
      </g>
    ),
  },
  { name: "RStudio", dot: true, art: <RTile /> },
  {
    name: "RStudio class",
    dot: true,
    art: (
      <g>
        <RTile />
        <rect x="4" y="60" width="64" height="13" rx="3" fill="#8bbbe6" stroke="#e8f2fb" strokeWidth="1.2" />
        <text x="36" y="70" textAnchor="middle" fontSize="10" fill="#fff" fontFamily="Open Sans, sans-serif" fontWeight="600">class</text>
      </g>
    ),
  },
];

const TRAY = [
  {
    name: "Minimized preview window",
    art: (
      <g>
        <rect x="4" y="20" width="64" height="40" fill="#fdfdfd" />
        <rect x="4" y="20" width="64" height="4" fill="#e1e1e3" />
        <rect x="29" y="25" width="24" height="35" fill="#efefef" />
        <rect x="50" y="51" width="15" height="19" fill="#4c86c2" stroke="#fff" transform="rotate(-8 57 60)" />
        <path d="M53 56 L59 60 L62 66 L54 64Z" fill="#5a3d25" />
      </g>
    ),
  },
  {
    name: "Minimized Slack window",
    art: (
      <g>
        <rect x="4" y="17" width="64" height="46" fill="#4a154b" />
        <circle cx="13" cy="25" r="1.5" fill="#36c5f0" />
        <g fill="#fff" fontFamily="Lato, sans-serif" fontWeight="700" fontSize="4">
          <text x="16" y="26">slack</text>
          <text x="11" y="33">Slack brings the</text>
          <text x="11" y="37">team together</text>
          <text x="11" y="41">wherever you are</text>
        </g>
        <rect x="11" y="44" width="21" height="3" fill="#1f8a60" />
        <path d="M46 28 L50 26 L56 30 L64 28 V44 L54 48 L48 42Z" fill="#7a3d7c" />
        <circle cx="47" cy="31" r="2" fill="#fff" />
        <circle cx="60" cy="30" r="2" fill="#e01e5a" />
        <circle cx="56" cy="60" r="11" fill="#fbfbfb" />
        <SlackMark cx={56} cy={60} s={0.38} />
      </g>
    ),
  },
  {
    name: "Minimized Chrome window",
    art: (
      <g>
        <rect x="4" y="20" width="64" height="40" fill="#000" />
        <rect x="4" y="20" width="64" height="5" fill="#e3e5e8" />
        <ChromeMark cx={56} cy={60} r={12} />
      </g>
    ),
  },
  {
    name: "Trash",
    art: (
      <g>
        <path d="M13 16 L24 9 L32 14 L42 8 L50 14 L58 13 L60 20 L36 26 L12 20Z" fill="#f5f5f5" />
        <path d="M18 14 L26 12 L28 22 L20 21Z M40 10 L47 20 L38 22Z M52 14 L56 19 L50 22Z" fill="#484848" />
        <path d="M30 14 L38 15 L34 20Z" fill="#3db6c9" />
        <path d="M12 18 Q36 30 60 18 L54 64 Q50 70 36 70 Q22 70 18 64Z" fill="#e4e4e4" />
        <path d="M20 30 L30 40 L24 58 M44 30 L38 48 L48 60" stroke="#f2f2f2" strokeWidth="4" fill="none" />
        <ellipse cx="36" cy="18" rx="24" ry="6" fill="none" stroke="#cfcfcf" strokeWidth="1.5" />
      </g>
    ),
  },
];

function DockItem({ app }) {
  return (
    <button aria-label={app.name} className="flex w-[73px] flex-col items-center pt-[2px]">
      <svg width="73" height="76" viewBox="0 0 73 76" aria-hidden="true">
        {app.art}
      </svg>
      {app.dot && <span className="size-[8px] rounded-full bg-[#3c3a3c]" />}
    </button>
  );
}

function Gradient({ id, stops, ...rest }) {
  return (
    <linearGradient id={id} x1="0" y1="0" x2="0" y2="1" {...rest}>
      {stops.map((c, i) => (
        <stop key={i} offset={i / (stops.length - 1)} stopColor={c} />
      ))}
    </linearGradient>
  );
}

function Defs() {
  return (
    <svg className="absolute size-0" aria-hidden="true">
      <defs>
        <Gradient id="siriTop" stops={["#c22a8b", "#2c2463", "#101030"]} />
        <Gradient id="finder" stops={["#2bc5fa", "#1d6df0"]} />
        <Gradient id="safari" stops={["#1ec0f3", "#1d6fe8"]} />
        <Gradient id="mailsky" stops={["#1c6fcd", "#9fd0f4"]} />
        <Gradient id="msg" stops={["#53c0fb", "#1a7bf3"]} />
        <Gradient id="fusion" stops={["#f8c896", "#fdf1e2"]} />
        <Gradient id="ftime" stops={["#5ff777", "#17c22c"]} />
        <Gradient id="books" stops={["#fbb03b", "#df4a16"]} />
        <Gradient id="store" stops={["#1fc0fb", "#1b62ee"]} />
        <Gradient id="prefs" stops={["#c9d3da", "#6b6e70"]} />
        <Gradient id="tunesRing" stops={["#fb4a5d", "#b04be0", "#3cb8fb"]} />
        <Gradient id="tunes" stops={["#fb4f6c", "#a455dd", "#4b8bf4"]} />
      </defs>
    </svg>
  );
}

function Dock() {
  return (
    <footer className="absolute bottom-0 left-1/2 z-40 flex h-[90px] -translate-x-1/2 rounded-t-[8px] bg-[linear-gradient(90deg,#dddcde_0%,#d2d0d3_7%,#a9969a_13%,#a08a8f_17%,#b3afb2_23%,#b9b7ba_30%,#b9b7ba_100%)] pl-[5px] pr-[6px] shadow-[0_0_70px_rgba(0,0,0,0.28),0_-1px_1px_rgba(0,0,0,0.5)]">
      {APPS.map((a) => (
        <DockItem key={a.name} app={a} />
      ))}
      <div className="mx-[15px] mb-[12px] mt-[12px] w-[2px] bg-[#8d8b8e]" />
      {TRAY.map((a) => (
        <DockItem key={a.name} app={a} />
      ))}
    </footer>
  );
}

export default function App() {
  return (
    <div className="relative h-screen w-full overflow-hidden bg-[linear-gradient(180deg,#3a4650_0%,#3a4650_50%,#ececec_96%,#f4f4f4_100%)]">
      <Defs />
      <MenuBar />
      <Wallpaper />
      <section aria-label="Background window" className="absolute bottom-[43px] right-0 top-[200px] z-0 w-1/2 bg-[#e9e9e9] shadow-[0_1px_0_#666]" />
      <BrowserWindow />
      <StudioWindow />
      <ViewerWindow />
      <Dock />
    </div>
  );
}
